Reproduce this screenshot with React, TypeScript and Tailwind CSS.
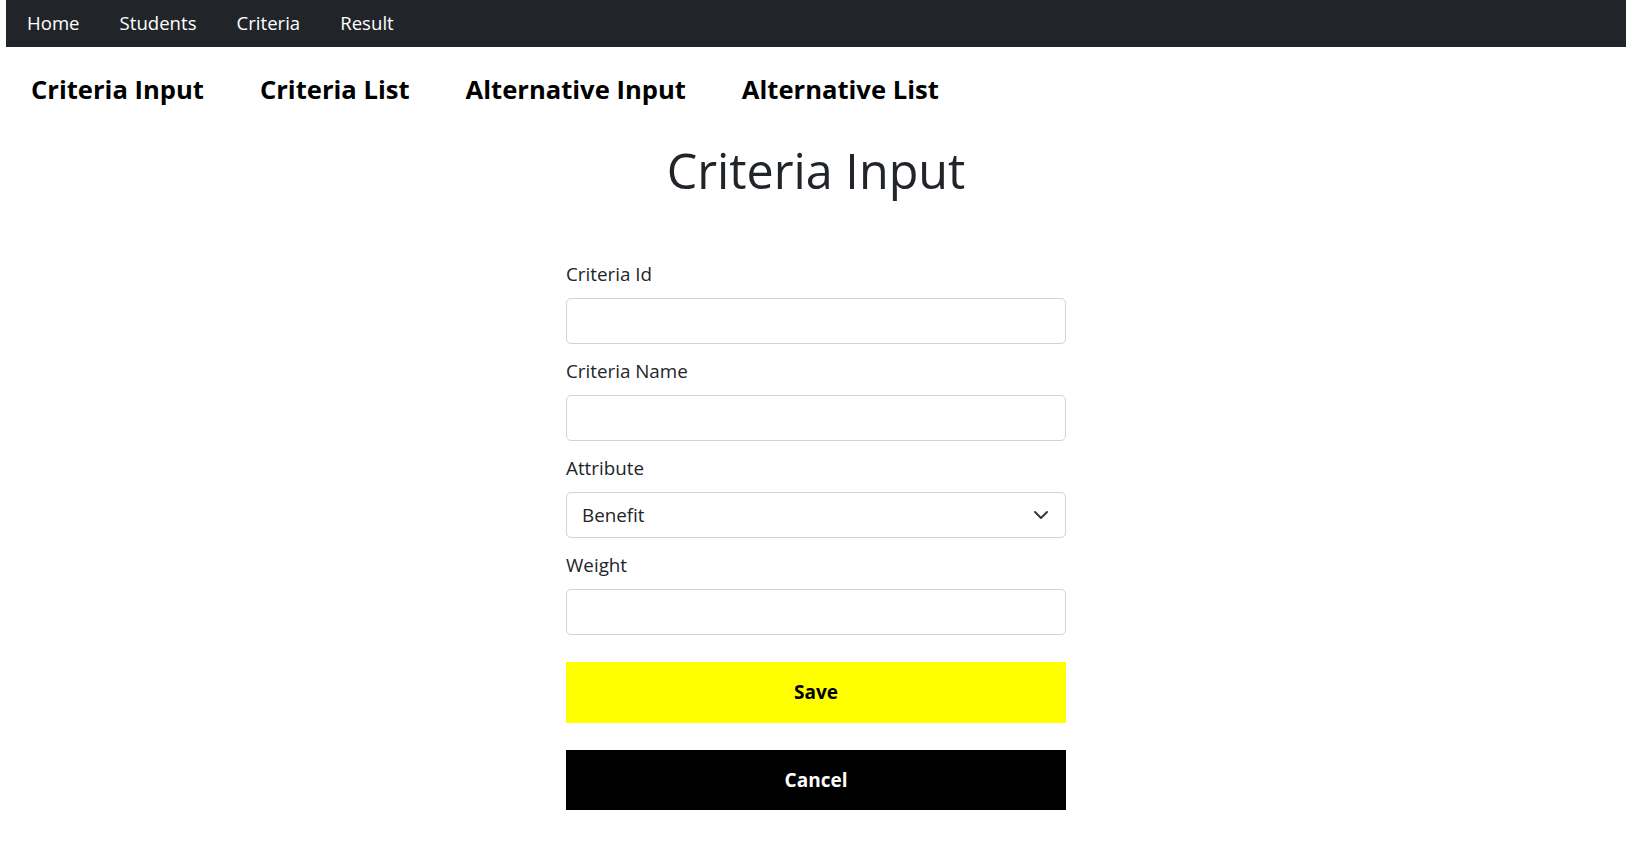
import React from 'react';

const navLinks = ['Home', 'Students', 'Criteria', 'Result'];
const tabs = ['Criteria Input', 'Criteria List', 'Alternative Input', 'Alternative List'];

function Field({ label, children }: { label: string; children: React.ReactNode }) {
  return (
    <div className="mb-[14px] flex flex-col">
      <label className="mb-[10px] text-[18.8px] leading-[27px] text-[#212529]">{label}</label>
      {children}
    </div>
  );
}

const inputCls =
  'h-[46px] w-full rounded-[5px] border border-[#ced4da] bg-white px-[15px] text-[18.8px] text-[#212529] outline-none';

export default function App() {
  return (
    <div
      className="min-h-screen bg-white pl-[6px] pr-[13px]"
      style={{ fontFamily: '"Open Sans", "Noto Sans", sans-serif' }}
    >
      {/* Top navbar */}
      <nav className="flex h-[47px] items-center gap-[40px] bg-[#212529] pb-[2px] pl-[21px]">
        {navLinks.map((l) => (
          <a key={l} className="text-[18.6px] text-white">
            {l}
          </a>
        ))}
      </nav>

      {/* Section tabs */}
      <div className="mt-[25px] flex gap-[56px] pl-[25px]">
        {tabs.map((t) => (
          <a key={t} className="text-[25.6px] font-bold leading-[36px] text-black">
            {t}
          </a>
        ))}
      </div>

      {/* Form */}
      <main className="flex flex-col items-center">
        <h1 className="mt-[33px] text-[48.5px] leading-[58px] text-[#212529]">Criteria Input</h1>

        <form className="mt-[62px] flex w-[500px] flex-col">
          <Field label="Criteria Id">
            <input className={inputCls} />
          </Field>
          <Field label="Criteria Name">
            <input className={inputCls} />
          </Field>
          <Field label="Attribute">
            <div className="relative">
              <select className={`${inputCls} appearance-none`} defaultValue="Benefit">
                <option>Benefit</option>
                <option>Cost</option>
              </select>
              <svg
                className="pointer-events-none absolute right-[17px] top-[15px]"
                width="16"
                height="16"
                viewBox="0 0 16 16"
                fill="none"
                stroke="#343a40"
                strokeWidth="2"
                strokeLinecap="round"
                strokeLinejoin="round"
              >
                <path d="m2 5 6 6 6-6" />
              </svg>
            </div>
          </Field>
          <Field label="Weight">
            <input className={inputCls} />
          </Field>

          <button
            type="button"
            className="mt-[13px] h-[61px] w-full bg-[#ffff00] text-[19px] font-bold text-black"
          >
            Save
          </button>
          <button
            type="button"
            className="mt-[27px] h-[60px] w-full bg-black text-[19px] font-bold text-white"
          >
            Cancel
          </button>
        </form>
      </main>
    </div>
  );
}
